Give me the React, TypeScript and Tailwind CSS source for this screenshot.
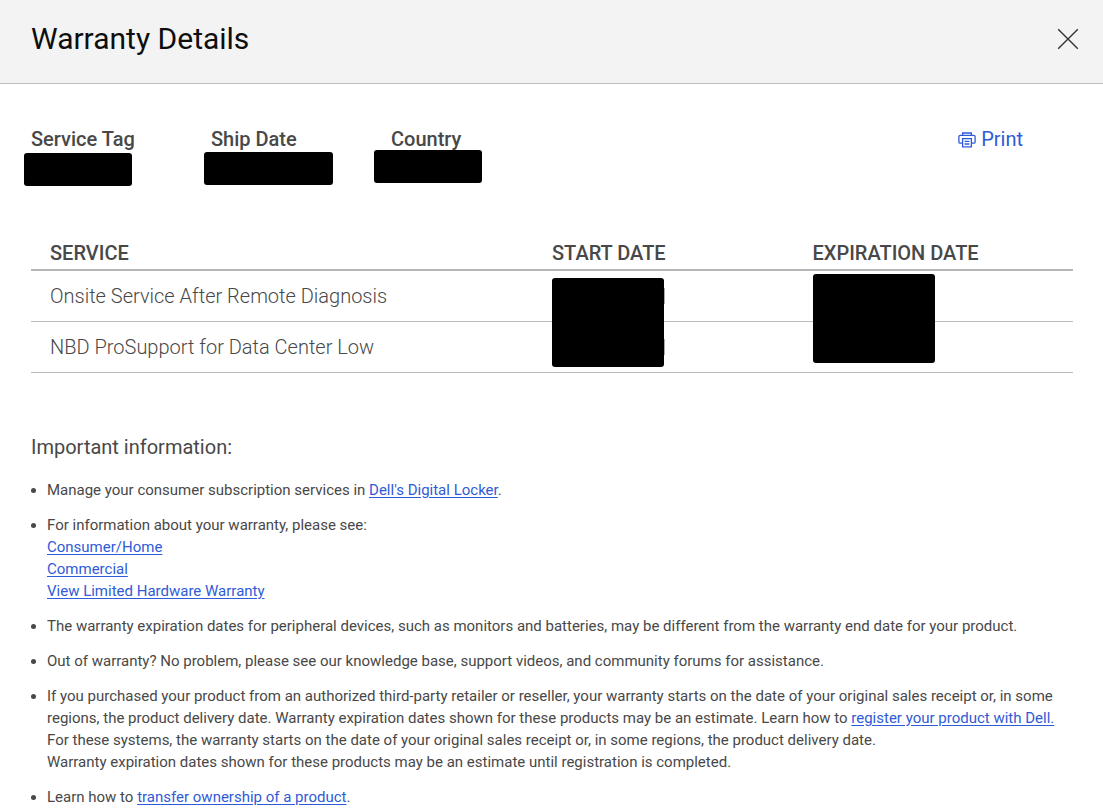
import type { ReactNode } from "react";

const details = [
  { label: "Service Tag", bar: "mt-px h-[33px] w-[108px] -ml-[7px]" },
  { label: "Ship Date", bar: "h-[33px] w-[129px] -ml-[7px]" },
  { label: "Country", bar: "-mt-0.5 h-[33px] w-[108px] -ml-[17px]" },
];

const services = ["Onsite Service After Remote Diagnosis", "NBD ProSupport for Data Center Low"];

function TextLink({ children }: { children: ReactNode }) {
  return (
    <a href="#" className="text-[#2f5bd8] underline underline-offset-2">
      {children}
    </a>
  );
}

function PrintIcon() {
  return (
    <svg width="18" height="18" viewBox="0 0 18 18" fill="none" stroke="currentColor" strokeWidth="1.3" aria-hidden="true">
      <path d="M4.6 5.4V3h8.8v2.4" />
      <path d="M4.6 13.2H2.2a1.3 1.3 0 0 1-1.3-1.3V6.7a1.3 1.3 0 0 1 1.3-1.3h13.6a1.3 1.3 0 0 1 1.3 1.3v5.2a1.3 1.3 0 0 1-1.3 1.3h-2.4" />
      <path d="M4.6 8.6h8.8v8.2H4.6z" />
      <path d="M6.6 11.3h4.8M6.6 14h4.8" />
    </svg>
  );
}

function CloseIcon() {
  return (
    <svg width="22" height="22" viewBox="0 0 22 22" fill="none" stroke="currentColor" strokeWidth="1.4" aria-hidden="true">
      <path d="M1.2 1.2l19.6 19.6M20.8 1.2L1.2 20.8" />
    </svg>
  );
}

export default function App() {
  return (
    <div className="bg-white font-['Roboto',sans-serif] text-[#484848]">
      <header className="flex h-[84px] items-center justify-between border-b border-[#bbb] bg-[#f3f3f3] pl-[31px] pr-6 pb-1.5">
        <h1 className="text-[30px] leading-9 text-[#0e0e0e]">Warranty Details</h1>
        <button type="button" aria-label="Close" className="text-[#333]">
          <CloseIcon />
        </button>
      </header>

      <main className="pl-[31px] pr-[30px]">
        <div className="flex items-start justify-between pt-[42px] pr-[50px]">
          <dl className="flex">
            {details.map((item) => (
              <div key={item.label} className="w-[180px]">
                <dt className="text-xl leading-[26px] font-medium">{item.label}</dt>
                <dd className={`rounded-[3px] bg-black ${item.bar}`} />
              </div>
            ))}
          </dl>
          <button type="button" className="flex items-center gap-[5px] text-xl leading-[26px] text-[#2f5bd8]">
            <PrintIcon />
            Print
          </button>
        </div>

        <div className="relative mt-[50px]">
          <table className="w-full table-fixed border-collapse text-left text-xl">
            <colgroup>
              <col className="w-1/2" />
              <col className="w-1/4" />
              <col className="w-1/4" />
            </colgroup>
            <thead>
              <tr className="h-[34px] border-b-2 border-[#b5b5b5] leading-[26px]">
                <th className="pl-[19px] font-medium">SERVICE</th>
                <th className="font-medium">START DATE</th>
                <th className="font-medium">EXPIRATION DATE</th>
              </tr>
            </thead>
            <tbody>
              {services.map((service) => (
                <tr key={service} className="h-[51px] border-b border-[#bbb]">
                  <td className="pl-[19px] font-light">{service}</td>
                  <td>
                    <span className="ml-28 block h-4 w-px bg-[#aaa]" />
                  </td>
                  <td />
                </tr>
              ))}
            </tbody>
          </table>
          {/* masked dates */}
          <div className="absolute top-[42px] left-1/2 h-[89px] w-28 rounded-[3px] bg-black" />
          <div className="absolute top-[38px] left-3/4 h-[89px] w-[122px] rounded-[3px] bg-black" />
        </div>

        <h2 className="mt-[61px] text-xl leading-[26px]">Important information:</h2>
        <ul className="mt-[19px] list-disc space-y-[13px] pl-4 text-[15px] leading-[22px]">
          <li>
            Manage your consumer subscription services in <TextLink>Dell's Digital Locker</TextLink>.
          </li>
          <li>
            For information about your warranty, please see:
            <br />
            <TextLink>Consumer/Home</TextLink>
            <br />
            <TextLink>Commercial</TextLink>
            <br />
            <TextLink>View Limited Hardware Warranty</TextLink>
          </li>
          <li>
            The warranty expiration dates for peripheral devices, such as monitors and batteries, may be different from
            the warranty end date for your product.
          </li>
          <li>
            Out of warranty? No problem, please see our knowledge base, support videos, and community forums for
            assistance.
          </li>
          <li>
            If you purchased your product from an authorized third-party retailer or reseller, your warranty starts on
            the date of your original sales receipt or, in some regions, the product delivery date. Warranty expiration
            dates shown for these products may be an estimate. Learn how to{" "}
            <TextLink>register your product with Dell.</TextLink>
            <br />
            For these systems, the warranty starts on the date of your original sales receipt or, in some regions, the
            product delivery date.
            <br />
            Warranty expiration dates shown for these products may be an estimate until registration is completed.
          </li>
          <li>
            Learn how to <TextLink>transfer ownership of a product</TextLink>.
          </li>
        </ul>
      </main>
    </div>
  );
}
